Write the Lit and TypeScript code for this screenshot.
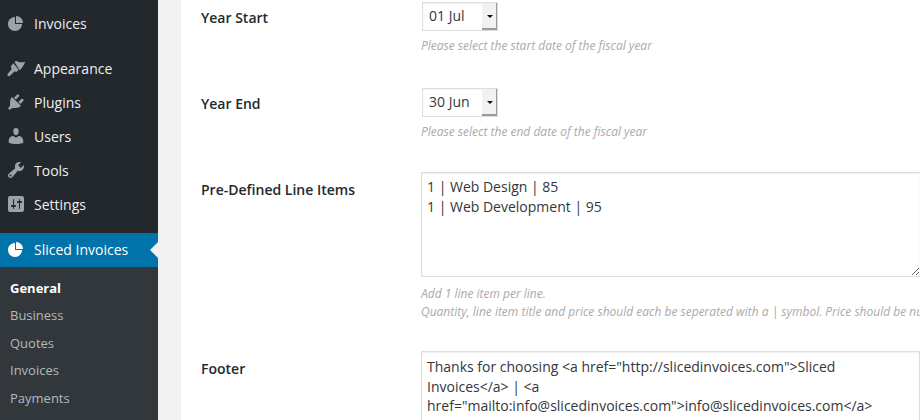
import { LitElement, html, css, svg } from "lit";
import { customElement } from "lit/decorators.js";

const ICONS = {
  pie: "M10 10V3c3.87 0 7 3.13 7 7h-7zM9 4v7h7c0 3.87-3.13 7-7 7s-7-3.13-7-7 3.13-7 7-7z",
  appearance: "M8.5 4L10 2.7C13 4.5 16 4.8 19.2 3.8C18 7 16.5 9.5 14 12L13.4 11.8ZM7.3 5.3L12.7 11.8L10.8 13.8L8.5 13.5L3.7 18C2.5 19 .7 17.5 1.7 16L5.5 11.2L5 8Z",
  plugins: "M13.11 4.36L9.87 7.6 8 5.73l3.24-3.24c.35-.34 1.05-.2 1.56.32.52.51.66 1.21.31 1.55zm-8 1.77l.91-1.12 9.01 9.01-1.19.84c-.71.71-2.63 1.16-3.82 1.16H6.14L4.9 17.26c-.59.59-1.54.59-2.12 0-.59-.58-.59-1.53 0-2.12l1.24-1.24v-3.88c0-1.13.4-3.19 1.09-3.89zm7.26 3.97l3.24-3.24c.34-.35 1.04-.21 1.55.31.52.51.66 1.21.31 1.55l-3.24 3.25z",
  users: "M10 9.25c-2.27 0-2.73-3.44-2.73-3.44C7 4.02 7.82 2 9.97 2c2.16 0 2.98 2.02 2.71 3.81 0 0-.41 3.44-2.68 3.44zm0 2.57L12.72 10c2.39 0 4.52 2.33 4.52 4.53v2.49s-3.65 1.13-7.24 1.13c-3.65 0-7.24-1.13-7.24-1.13v-2.49c0-2.25 1.94-4.48 4.47-4.48z",
  tools: "M16.68 9.77c-1.34 1.34-3.3 1.67-4.95.99l-5.41 6.52c-.99.99-2.59.99-3.58 0s-.99-2.59 0-3.57l6.52-5.42c-.68-1.65-.35-3.61.99-4.95 1.28-1.28 3.12-1.62 4.72-1.06l-2.89 2.89 2.82 2.82 2.86-2.87c.53 1.58.18 3.39-1.08 4.65zM3.81 16.21c.4.39 1.04.39 1.43 0 .4-.4.4-1.04 0-1.43-.39-.4-1.03-.4-1.43 0-.39.39-.39 1.03 0 1.43z",
  settings: "M18 16V4c0-1.1-.9-2-2-2H4c-1.1 0-2 .9-2 2v12c0 1.1.9 2 2 2h12c1.1 0 2-.9 2-2zM8 11h1c.55 0 1 .45 1 1s-.45 1-1 1H8v1.5c0 .28-.22.5-.5.5s-.5-.22-.5-.5V13H6c-.55 0-1-.45-1-1s.45-1 1-1h1V5.5c0-.28.22-.5.5-.5s.5.22.5.5V11zm5-2h-1c-.55 0-1-.45-1-1s.45-1 1-1h1V5.5c0-.28.22-.5.5-.5s.5.22.5.5V7h1c.55 0 1 .45 1 1s-.45 1-1 1h-1v5.5c0 .28-.22.5-.5.5s-.5-.22-.5-.5V9z",
};

const icon = (d: string) => html`<svg class="ico" viewBox="0 0 20 20" width="20" height="20">${svg`<path d=${d} />`}</svg>`;

@customElement("app-root")
export class AppRoot extends LitElement {
  static styles = css`
    :host { display: block; width: 920px; height: 420px; overflow: hidden; font-family: "Open Sans", sans-serif; background: #f1f1f1; }
    .page { display: flex; height: 420px; }
    .side { width: 158px; flex: none; background: #23282d; padding-top: 7px; box-sizing: border-box; overflow: hidden; }
    .item { position: relative; box-sizing: border-box; display: flex; align-items: center; height: 34px; padding-bottom: 2px; color: #eee; font-size: 14px; }
    .ico { flex: none; margin: 0 8px 0 6px; fill: #9ea3a8; }
    .gap { height: 11px; }
    .item.cur { background: #0073aa; color: #fff; }
    .item.cur .ico { fill: #fff; }
    .item.cur::after { content: ""; position: absolute; right: 0; top: 9px; border: 8px solid transparent; border-right-color: #f1f1f1; border-left-width: 0; }
    .sub { background: #32373c; padding-top: 7.5px; height: 160px; font-size: 13px; color: #b4b9be; }
    .sub div { height: 27.5px; line-height: 27.5px; padding-left: 10px; }
    .sub .on { color: #fff; font-weight: 700; }
    .main { flex: 1; min-width: 0; margin-left: 23px; background: #fff; padding: 2px 0 0 20px; overflow: hidden; }
    .row { display: grid; grid-template-columns: 220px 1fr; }
    .row.a { height: 86px; }
    .row.b { height: 84px; }
    .row.c { height: 179px; }
    .label { font-size: 14px; font-weight: 600; color: #23282d; line-height: 32px; }
    .c .label, .d .label { line-height: 36px; }
    .field { min-width: 0; }
    .select { box-sizing: border-box; display: flex; width: 76px; height: 29px; margin-left: 1px; border: 1px solid #ddd; font-size: 14px; color: #32373c; background: #fff; box-shadow: inset 0 1px 2px rgba(0,0,0,.05); }
    .select span { flex: 1; padding-left: 6px; line-height: 26px; }
    .btn { position: relative; width: 14px; background: #f1f1f1; border-right: 1px solid #9a9a9a; border-bottom: 2px solid #9a9a9a; }
    .btn::after { content: ""; position: absolute; left: 5px; top: 12px; border: 3px solid transparent; border-top: 3px solid #111; border-bottom: 0; }
    .hint { font-size: 12px; font-style: italic; color: #aaa; line-height: 18px; white-space: nowrap; margin-top: 6px; }
    .hint.tight { margin-top: 0; }
    textarea { display: block; box-sizing: border-box; width: 500px; height: 105px; margin: 0; padding: 4px 5px; border: 1px solid #ddd; border-radius: 0; outline: 0; font: 14px/19.6px "Open Sans", sans-serif; color: #32373c; background: #fff; box-shadow: inset 0 1px 2px rgba(0,0,0,.07); overflow: hidden; }
    .c textarea { margin-bottom: 8px; }
    .d textarea { height: 90px; width: 499px; padding-top: 5px; }
  `;

  render() {
    return html`<div class="page">
      <nav class="side">
        <div class="item">${icon(ICONS.pie)}Invoices</div>
        <div class="gap"></div>
        <div class="item">${icon(ICONS.appearance)}Appearance</div>
        <div class="item">${icon(ICONS.plugins)}Plugins</div>
        <div class="item">${icon(ICONS.users)}Users</div>
        <div class="item">${icon(ICONS.tools)}Tools</div>
        <div class="item">${icon(ICONS.settings)}Settings</div>
        <div class="gap"></div>
        <div class="item cur">${icon(ICONS.pie)}Sliced Invoices</div>
        <div class="sub">
          <div class="on">General</div><div>Business</div><div>Quotes</div><div>Invoices</div><div>Payments</div>
        </div>
      </nav>
      <main class="main">
        <div class="row a">
          <div class="label">Year Start</div>
          <div class="field">
            <div class="select"><span>01 Jul</span><i class="btn"></i></div>
            <div class="hint">Please select the start date of the fiscal year</div>
          </div>
        </div>
        <div class="row b">
          <div class="label">Year End</div>
          <div class="field">
            <div class="select"><span>30 Jun</span><i class="btn"></i></div>
            <div class="hint">Please select the end date of the fiscal year</div>
          </div>
        </div>
        <div class="row c">
          <div class="label">Pre-Defined Line Items</div>
          <div class="field">
            <textarea .value=${"1 | Web Design | 85\n1 | Web Development | 95"}></textarea>
            <div class="hint">Add 1 line item per line.</div>
            <div class="hint tight">Quantity, line item title and price should each be seperated with a | symbol. Price should be numbers only.</div>
          </div>
        </div>
        <div class="row d">
          <div class="label">Footer</div>
          <div class="field">
            <textarea .value=${'Thanks for choosing <a href="http://slicedinvoices.com">Sliced Invoices</a> | <a href="mailto:info@slicedinvoices.com">info@slicedinvoices.com</a>'}></textarea>
          </div>
        </div>
      </main>
    </div>`;
  }
}
